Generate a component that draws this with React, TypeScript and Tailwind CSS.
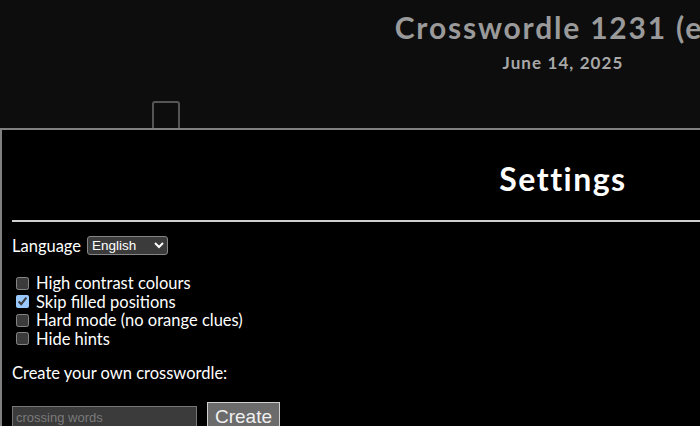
import React from 'react';

const options = [
  { label: 'High contrast colours', checked: false },
  { label: 'Skip filled positions', checked: true },
  { label: 'Hard mode (no orange clues)', checked: false },
  { label: 'Hide hints', checked: false },
];

export default function App() {
  return (
    <div className="relative h-[426px] w-[700px] overflow-hidden bg-[#0d0d0d] font-['Lato',sans-serif] scheme-dark">
      {/* Page header */}
      <div className="flex w-[1126px] flex-col items-center">
        <h1 className="mt-[9px] whitespace-nowrap text-[30px] font-bold leading-[36px] tracking-[1.8px] text-[#9a9a9a]">
          Crosswordle 1231 (en)
        </h1>
        <div className="mt-[8px] text-[17px] font-bold leading-[20px] tracking-[1.1px] text-[#a8a8a8]">June 14, 2025</div>
      </div>

      {/* Grid peeking out from behind the modal */}
      <div className="ml-[152px] mt-[28px] h-[30px] w-[28px] rounded-t-[3px] border-2 border-[#555]"></div>

      {/* Settings modal */}
      <div className="absolute left-0 top-[128px] w-[1126px] border-2 border-[#808080] bg-black px-[10px] text-white">
        <h2 className="mt-[30px] text-center text-[32px] font-bold leading-[38px] tracking-[1.5px]">Settings</h2>
        <hr className="mt-[22px] border-t-2 border-[#cfcfcf]" />

        <div className="mt-[14px] flex items-center text-[16.5px] leading-[18px]">
          <span>Language</span>
          <select
            defaultValue="en"
            className="ml-[6px] h-[19px] w-[81px] rounded-[3px] border border-[#858585] bg-[#3b3b3b] font-['Liberation_Sans',sans-serif] text-[13.5px] text-white"
          >
            <option value="en">English</option>
            <option value="fr">Français</option>
            <option value="de">Deutsch</option>
          </select>
        </div>

        <div className="mt-[19px] flex flex-col text-[16.5px] leading-[18.5px]">
          {options.map((o) => (
            <label key={o.label} className="flex items-center">
              <input type="checkbox" defaultChecked={o.checked} className="ml-[4px] mr-[7px] h-[13px] w-[13px]" />
              <span>{o.label}</span>
            </label>
          ))}
        </div>

        <p className="mt-[16px] text-[16.5px] leading-[18px]">Create your own crosswordle:</p>

        <div className="mt-[20px] flex items-end">
          <input
            type="text"
            placeholder="crossing words"
            className="h-[22px] w-[185px] border border-[#767676] bg-[#3b3b3b] px-[3px] font-['Liberation_Sans',sans-serif] text-[13px] text-white placeholder:text-[#7a7a7a]"
          />
          <button className="mb-[-4px] ml-[10px] h-[30px] border border-[#d0d0d0] bg-[#6b6b6b] px-[7px] font-['Liberation_Sans',sans-serif] text-[19px] leading-[22px] text-[#f0f0f0]">
            Create
          </button>
        </div>
      </div>
    </div>
  );
}
